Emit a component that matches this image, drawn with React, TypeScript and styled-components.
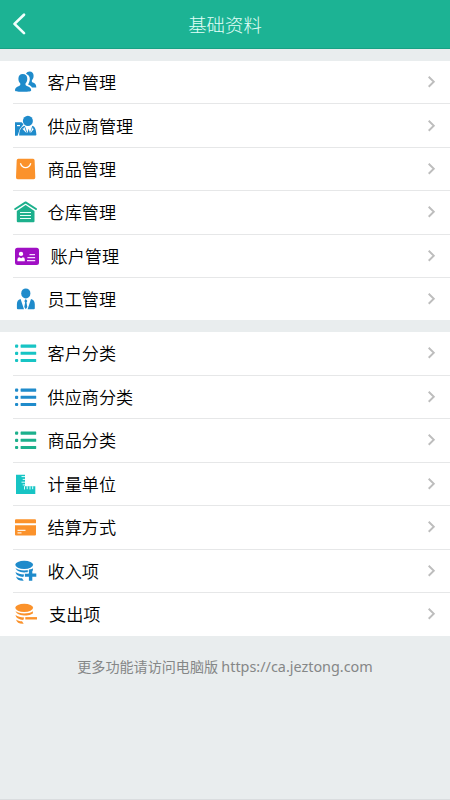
import React from "react";
import styled, { createGlobalStyle } from "styled-components";

const GlobalStyle = createGlobalStyle`
  * { box-sizing: border-box; }
  html, body { margin: 0; padding: 0; background: #e9edee; }
  body { font-family: "Noto Sans CJK SC", sans-serif; color: #000; }
`;

const Screen = styled.main`
  display: flex;
  flex-direction: column;
  width: 450px;
  height: 800px;
  overflow: hidden;
  background: #e9edee;
  border-bottom: 1px solid #dadddf;
`;

const Header = styled.header`
  display: grid;
  grid-template-columns: 48px 1fr 48px;
  align-items: center;
  flex: none;
  height: 49px;
  background: #1cb394;
  border-bottom: 1px solid #18a184;
`;

const BackButton = styled.button`
  display: flex;
  width: 48px;
  height: 48px;
  padding: 0;
  border: 0;
  background: none;
`;

const Title = styled.h1`
  margin: 0;
  color: #e2fff8;
  font-size: 18.4px;
  font-weight: 300;
  line-height: 48px;
  text-align: center;
`;

const Group = styled.section<{ $height: number }>`
  display: flex;
  flex-direction: column;
  flex: none;
  height: ${(p) => p.$height}px;
  margin-top: 12px;
  background: #fff;
`;

const Row = styled.div<{ $height: number }>`
  display: flex;
  flex: none;
  height: ${(p) => p.$height}px;
  padding-left: 13px;
`;

const IconSlot = styled.div`
  display: flex;
  align-items: center;
  width: 35px;
  flex: none;
`;

const Body = styled.div<{ $indent: number }>`
  display: flex;
  flex: 1;
  align-items: center;
  justify-content: space-between;
  padding: 0 13px 0 ${(p) => p.$indent}px;
`;

const Item = styled.div`
  display: flex;
  flex: 1;
  border-bottom: 1px solid #e6e7e8;
  ${Row}:last-child > & {
    border-bottom-color: transparent;
  }
`;

const Label = styled.span`
  margin-left: -0.5px;
  font-size: 17.15px;
  line-height: 26px;
  font-weight: 350;
  white-space: nowrap;
`;

const Footer = styled.footer`
  padding-top: 19px;
  color: #858787;
  font-size: 14.1px;
  line-height: 22px;
  text-align: center;
`;

const Link = styled.span`
  font-family: "Noto Sans", sans-serif;
  font-size: 14.4px;
`;

const BLUE = "#1f8bcb";
const ORANGE = "#fb922b";
const TEAL = "#17c4c4";
const GREEN = "#1cb08c";

const Glyph = ({ children, fill }: { children: React.ReactNode; fill: string }) => (
  <svg width="27" height="26" viewBox="0 -0.7 27 26" fill={fill}>{children}</svg>
);

const Customers = () => (
  <Glyph fill={BLUE}>
    <path d="M13 4c.8-1.600 2-2.300 3.600-2.300 2.600 0 4 1.700 4 4.300 0 2-.6 3.400-1.700 4.500-.4 1.500.3 2 1.700 2.600 1.900.8 2.600 2 2.700 4.700h-4.300c-.8-1.600-2.200-2.400-4-3.100 1.200-1.700 1.800-3.300 1.800-5.400C16.800 6.700 15.500 5 13 4Z" />
    <path d="M9.700 4.200c2.900 0 4.600 1.900 4.600 4.900 0 2-.7 3.700-1.800 4.800-.3 1.500.4 2.100 2 2.700 2.600 1 3.700 2.300 3.700 4.000 0 1-1.700 1.500-8.300 1.500S2 21.600 2 20.600c0-1.700 1-3.100 3.500-4 1.500-.6 2.100-1.200 1.800-2.700-1.200-1.100-1.900-2.800-1.900-4.800 0-3 1.600-4.900 4.300-4.900Z" />
  </Glyph>
);

const Supplier = () => (
  <Glyph fill={BLUE}>
    <path d="M2 8.600h6.600l1.900 2-3.700 4.700L4.600 22H2Z" />
    <path d="M4 11.300h3v1.200H4z" fill="#fff" />
    <ellipse cx="14.900" cy="7.200" rx="5" ry="5.200" />
    <path d="m11.800 12 2.600 7.200 1.300-4.200 1.300 4.200 2.300-7.200c2.900 1.100 3.700 3.700 4.100 8.700 0 .7-.5 1-1.200 1H6.200c0-5 1.600-8.400 5.600-9.700Z" />
    <path d="m11.300 13 2.400 6.600-4.400-4.600 1.300-.3Zm8.300 0-2.100 6.600 3.300-4.300-1.300-.5Z" fill="#fff" />
  </Glyph>
);

const Goods = () => (
  <Glyph fill={ORANGE}>
    <path d="M5.200 2h14.900q1.400 0 1.500 1.500L22.300 20.500q.1 2-1.700 2H4.700Q2.900 22.500 3 20.500l.7-17Q3.800 2 5.200 2Z" />
    <path d="M7.400 6.500c2 5.800 8.400 5.800 10.400 0" fill="none" stroke="#fff" strokeWidth="1.300" />
  </Glyph>
);

const Warehouse = () => (
  <Glyph fill={GREEN}>
    <path d="m2.200 9.300 10.400-6.600L23 9.300" fill="none" stroke={GREEN} strokeWidth="2" strokeLinecap="round" strokeLinejoin="round" />
    <path d="m12.600 5.200 8.900 6v10.400q0 1-1 1H4.800q-1 0-1-1V11.200Z" />
    <path d="M7 12.800h11M7 15.800h11M7 18.800h11" stroke="#e8fff8" strokeWidth="1.200" />
  </Glyph>
);

const Account = () => (
  <Glyph fill="#a00fc4">
    <rect x="2" y="4" width="24" height="17.400" rx="2.500" />
    <circle cx="8" cy="10.200" r="2.200" fill="#fff" />
    <path d="M4.400 17.500v-1.600q0-2.300 2-2.300l1.700.9 1.700-.9q2 0 2 2.300v1.600Z" fill="#fff" />
    <path d="M16.500 11H22M14.400 14h7.700M14 17h8.200" stroke="#f6d9ff" strokeWidth="1.300" />
  </Glyph>
);

const Staff = () => (
  <Glyph fill={BLUE}>
    <ellipse cx="12.800" cy="6.700" rx="4.600" ry="5" />
    <path d="M7.600 12.300 11 22.600H4.900q-1 0-1-1v-4.100c.1-3 1-4.500 3.700-5.200ZM18 12.300l-3.400 10.300h6.200q1 0 1-1v-4.100c-.1-3-1.100-4.500-3.800-5.200ZM12.800 12.400l1.500 1.800-.8 1.600.8 4.600-1.500 2.200-1.500-2.200.8-4.600-.8-1.600Z" />
  </Glyph>
);

const ListIcon = ({ color }: { color: string }) => (
  <Glyph fill={color}>
    {[3.9, 11, 18.2].map((y) => (
      <React.Fragment key={y}>
        <rect x="2" y={y} width="3.200" height="3.200" rx="1" />
        <rect x="7.600" y={y} width="15.600" height="3.100" rx=".4" />
      </React.Fragment>
    ))}
  </Glyph>
);

const Ruler = () => (
  <Glyph fill={TEAL}>
    <path d="M3 3h9v11.500h10.300v7.900H3Z" />
    <path d="M8.500 4.900H12M9.700 7.700H12M8.500 10.500H12M9.700 13.200H12M11.500 14.500v3.300M14.200 14.500v3M17 14.500v3.300M19.700 14.500v3" stroke="#dcffff" strokeWidth="1" />
  </Glyph>
);

const Card = () => (
  <Glyph fill={ORANGE}>
    <path d="M3 4.500h19q1 0 1 1V8.500H2V5.500q0-1 1-1ZM2 10.500h21v9.400q0 1-1 1H3q-1 0-1-1Z" />
    <path d="M4.500 15.700h8M4.500 18.200h4" stroke="#fff0de" strokeWidth="1.100" />
  </Glyph>
);

const Coins = ({ color, plus }: { color: string; plus?: boolean }) => (
  <Glyph fill={color}>
    <ellipse cx="11.200" cy="6.100" rx="8.900" ry="4.100" />
    <path d="M2.500 9.300c2.800 3.200 13.700 3.300 17.400.2v2.400c-2 1.300-4.500 1.800-6.300 1.900-5.200.1-9.600-.8-11.100-4.500ZM2.500 13.400c2 1.800 5.200 2.300 8.700 2.400l-.9 2.400c-4.200-.2-7-1.400-7.800-4.800ZM3 17.800c1.600 1.200 3.400 1.700 6 1.800l1.700 2.400c-4.600.2-7-1.200-7.700-4.200Z" />
    {plus ? (
      <path d="M15.900 10.900h3.400v4h4v3.200h-4v4h-3.400v-4h-4v-3.200h4Z" />
    ) : (
      <path d="M12.300 15.400H24v2.400H12.300Z" />
    )}
    {plus && <path d="M15.300 10.400v3.900H12" fill="none" stroke="#fff" strokeWidth="1" />}
  </Glyph>
);

const Chevron = () => (
  <svg width="11" height="14" viewBox="0 0 11 14" fill="none" stroke="#bdbdbd" strokeWidth="1.900">
    <path d="m2.700 1.800 5.100 5-5.100 5" />
  </svg>
);

type Entry = { label: string; icon: React.ReactNode; indent?: number };

const management: Entry[] = [
  { label: "客户管理", icon: <Customers /> },
  { label: "供应商管理", icon: <Supplier /> },
  { label: "商品管理", icon: <Goods /> },
  { label: "仓库管理", icon: <Warehouse /> },
  { label: "账户管理", icon: <Account />, indent: 3 },
  { label: "员工管理", icon: <Staff /> },
];

const categories: Entry[] = [
  { label: "客户分类", icon: <ListIcon color={TEAL} /> },
  { label: "供应商分类", icon: <ListIcon color={BLUE} /> },
  { label: "商品分类", icon: <ListIcon color={GREEN} /> },
  { label: "计量单位", icon: <Ruler /> },
  { label: "结算方式", icon: <Card /> },
  { label: "收入项", icon: <Coins color={BLUE} plus /> },
  { label: "支出项", icon: <Coins color={ORANGE} />, indent: 1.5 },
];

type EntryGroupProps = { entries: Entry[]; height: number; rowHeight: number };

const EntryGroup = ({ entries, height, rowHeight }: EntryGroupProps) => (
  <Group $height={height}>
    {entries.map(({ label, icon, indent = 0 }) => (
      <Row key={label} $height={rowHeight}>
        <Item>
          <IconSlot>{icon}</IconSlot>
          <Body $indent={indent}>
            <Label>{label}</Label>
            <Chevron />
          </Body>
        </Item>
      </Row>
    ))}
  </Group>
);

export default function App() {
  return (
    <>
      <GlobalStyle />
      <Screen>
        <Header>
          <BackButton aria-label="返回">
            <svg width="48" height="48" viewBox="0 0 48 48" fill="none" stroke="#f2fffc" strokeWidth="2.700" strokeLinecap="round" strokeLinejoin="round">
              <path d="m24 14.700-9.500 9.200 9.500 9.200" />
            </svg>
          </BackButton>
          <Title>基础资料</Title>
        </Header>
        <EntryGroup entries={management} height={259} rowHeight={43.4} />
        <EntryGroup entries={categories} height={304} rowHeight={43.5} />
        <Footer>
          更多功能请访问电脑版 <Link>https://ca.jeztong.com</Link>
        </Footer>
      </Screen>
    </>
  );
}
